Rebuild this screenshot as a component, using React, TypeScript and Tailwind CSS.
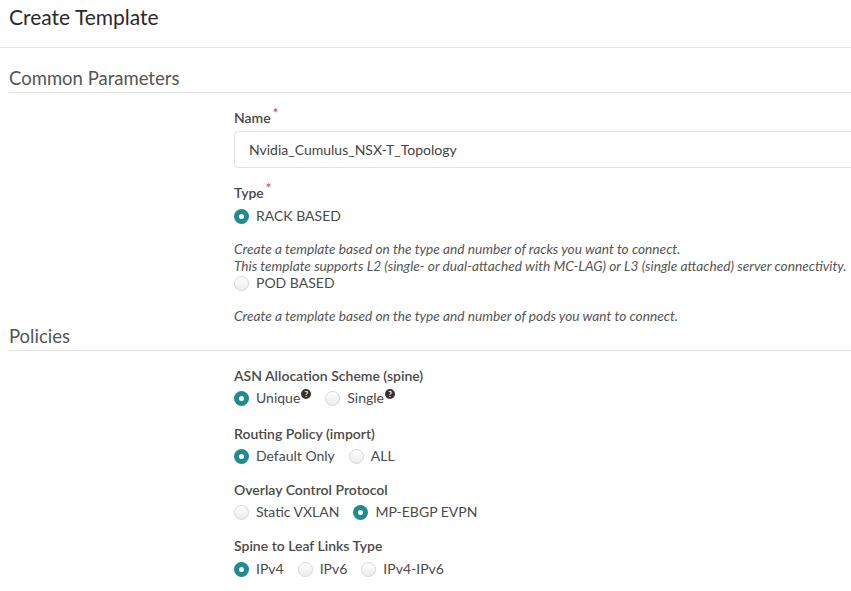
function Radio({ label, checked, help }: { label: string; checked?: boolean; help?: boolean }) {
    return (
        <label className="flex items-center gap-[7px]">
            {checked ? (
                <span className="w-[15px] h-[15px] rounded-full bg-[#1f8b8d] flex items-center justify-center">
                    <span className="w-[5px] h-[5px] rounded-full bg-white" />
                </span>
            ) : (
                <span className="w-[15px] h-[15px] rounded-full border border-[#d6d6d6] bg-gradient-to-b from-white to-[#ececec]" />
            )}
            <span className="text-[14px] leading-[18px] text-[#4a4a4a]">
                {label}
                {help && (
                    <sup className="inline-flex items-center justify-center w-[10px] h-[10px] rounded-full bg-[#333] text-white text-[8px] font-bold leading-none ml-[1px] -top-[6px] relative align-baseline">?</sup>
                )}
            </span>
        </label>
    )
}

function Label({ text, required }: { text: string; required?: boolean }) {
    return (
        <p className="text-[14px] leading-[18px] font-semibold text-[#4a4a4a]">
            {text}
            {required && <span className="text-[#d0455a] text-[13px] relative -top-[5px] ml-[2px]">*</span>}
        </p>
    )
}

function App() {
    return (
        <div className="w-[851px] h-[591px] overflow-hidden bg-white font-['Lato','Open_Sans',sans-serif]">
            <div className="h-[48px] border-b border-[#e6e6e6] pl-[9px] pt-[4px]">
                <h1 className="text-[21px] leading-[26px] text-[#2a2a2a]">Create Template</h1>
            </div>

            <div className="pl-[9px]">
                <h2 className="mt-[18px] pb-[2px] border-b border-[#e0e0e0] text-[18.5px] leading-[24px] text-[#555]">Common Parameters</h2>
            </div>

            <div className="pl-[234px]">
                <div className="mt-[16px]"><Label text="Name" required /></div>
                <div className="mt-[4px] w-[700px] h-[37px] border border-[#e2e2e2] rounded-[4px] flex items-center pl-[14px] text-[14px] text-[#444]">
                    Nvidia_Cumulus_NSX-T_Topology
                </div>
                <div className="mt-[16px]"><Label text="Type" required /></div>
                <div className="mt-[5px]"><Radio label="RACK BASED" checked /></div>
                <div className="mt-[15px] text-[13.7px] leading-[17px] italic text-[#555] whitespace-nowrap">
                    <p>Create a template based on the type and number of racks you want to connect.</p>
                    <p>This template supports L2 (single- or dual-attached with MC-LAG) or L3 (single attached) server connectivity.</p>
                </div>
                <Radio label="POD BASED" />
                <p className="mt-[15px] text-[13.7px] leading-[17px] italic text-[#555]">Create a template based on the type and number of pods you want to connect.</p>
            </div>

            <div className="pl-[9px]">
                <h2 className="pb-[2px] border-b border-[#e0e0e0] text-[18.5px] leading-[24px] text-[#555]">Policies</h2>
            </div>

            <div className="pl-[234px]">
                <div className="mt-[16px]"><Label text="ASN Allocation Scheme (spine)" /></div>
                <div className="mt-[4px] flex gap-[14px]">
                    <Radio label="Unique" checked help />
                    <Radio label="Single" help />
                </div>
                <div className="mt-[18px]"><Label text="Routing Policy (import)" /></div>
                <div className="mt-[4px] flex gap-[14px]">
                    <Radio label="Default Only" checked />
                    <Radio label="ALL" />
                </div>
                <div className="mt-[16px]"><Label text="Overlay Control Protocol" /></div>
                <div className="mt-[4px] flex gap-[14px]">
                    <Radio label="Static VXLAN" />
                    <Radio label="MP-EBGP EVPN" checked />
                </div>
                <div className="mt-[16px]"><Label text="Spine to Leaf Links Type" /></div>
                <div className="mt-[5px] flex gap-[14px]">
                    <Radio label="IPv4" checked />
                    <Radio label="IPv6" />
                    <Radio label="IPv4-IPv6" />
                </div>
            </div>
        </div>
    )
}

export default App;
